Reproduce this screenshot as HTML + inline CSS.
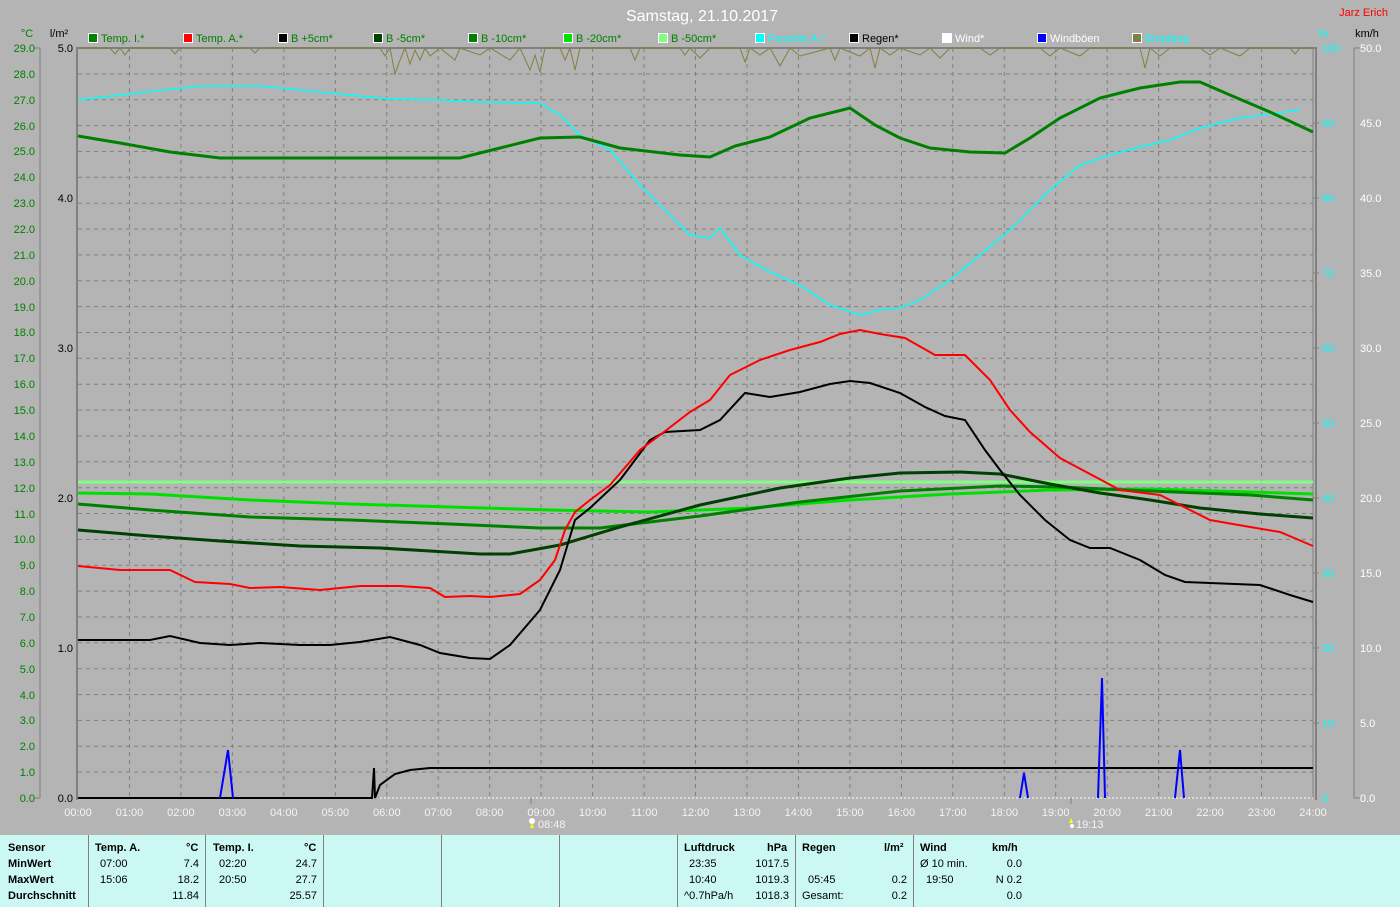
<!DOCTYPE html>
<html><head><meta charset="utf-8"><style>
html,body{margin:0;padding:0;background:#b4b4b4;width:1400px;height:907px;overflow:hidden;font-family:"Liberation Sans",sans-serif}
svg{position:absolute;left:0;top:0}
.tb{position:absolute;left:0;top:835px;width:1400px;height:72px;background:#ccf8f4;font-size:11px;color:#000}
.tb div{position:absolute;white-space:nowrap}
.b{font-weight:bold}
.sep{position:absolute;top:0;width:1px;height:72px;background:#808080}
</style></head><body>
<svg width="1400" height="835" font-family="Liberation Sans, sans-serif" font-size="11">
<text x="702" y="21" fill="#fff" font-size="16" text-anchor="middle">Samstag, 21.10.2017</text>
<text x="1388" y="16" fill="#f00" text-anchor="end">Jarz Erich</text>
<text x="27" y="37" fill="#008000" text-anchor="middle">°C</text>
<text x="59" y="37" fill="#000" text-anchor="middle">l/m²</text>
<text x="1323" y="37" fill="#0ff" text-anchor="middle">%</text>
<text x="1367" y="37" fill="#000" text-anchor="middle">km/h</text>
<g stroke="#fff" stroke-width="1">
<rect x="88.5" y="33.5" width="9" height="9" fill="#008000"/>
<rect x="183.5" y="33.5" width="9" height="9" fill="#f00"/>
<rect x="278.5" y="33.5" width="9" height="9" fill="#000"/>
<rect x="373.5" y="33.5" width="9" height="9" fill="#004000"/>
<rect x="468.5" y="33.5" width="9" height="9" fill="#008000"/>
<rect x="563.5" y="33.5" width="9" height="9" fill="#00e000"/>
<rect x="658.5" y="33.5" width="9" height="9" fill="#80ff80"/>
<rect x="755.5" y="33.5" width="9" height="9" fill="#0ff"/>
<rect x="849.5" y="33.5" width="9" height="9" fill="#000"/>
<rect x="942.5" y="33.5" width="9" height="9" fill="#fff"/>
<rect x="1037.5" y="33.5" width="9" height="9" fill="#00f"/>
<rect x="1132.5" y="33.5" width="9" height="9" fill="#808040"/>
</g>
<g>
<text x="101" y="42" fill="#008000">Temp. I.*</text>
<text x="196" y="42" fill="#008000">Temp. A.*</text>
<text x="291" y="42" fill="#008000">B +5cm*</text>
<text x="386" y="42" fill="#008000">B -5cm*</text>
<text x="481" y="42" fill="#008000">B -10cm*</text>
<text x="576" y="42" fill="#008000">B -20cm*</text>
<text x="671" y="42" fill="#008000">B -50cm*</text>
<text x="768" y="42" fill="#0ff">Feuchte A.*</text>
<text x="862" y="42" fill="#000">Regen*</text>
<text x="955" y="42" fill="#fff">Wind*</text>
<text x="1050" y="42" fill="#fff">Windböen</text>
<text x="1145" y="42" fill="#0ff">Empfang</text>
</g>
<!-- grid -->
<path stroke="#808080" stroke-dasharray="4,4" fill="none" d="M78 772.1H1313M78 746.3H1313M78 720.4H1313M78 694.6H1313M78 668.7H1313M78 642.8H1313M78 617H1313M78 591.1H1313M78 565.2H1313M78 539.4H1313M78 513.5H1313M78 487.7H1313M78 461.8H1313M78 435.9H1313M78 410.1H1313M78 384.2H1313M78 358.3H1313M78 332.5H1313M78 306.6H1313M78 280.8H1313M78 254.9H1313M78 229H1313M78 203.2H1313M78 177.3H1313M78 151.4H1313M78 125.6H1313M78 99.7H1313M78 73.9H1313M129.5 48V798M180.9 48V798M232.4 48V798M283.8 48V798M335.3 48V798M386.8 48V798M438.2 48V798M489.7 48V798M541.1 48V798M592.6 48V798M644.1 48V798M695.5 48V798M747 48V798M798.4 48V798M849.9 48V798M901.4 48V798M952.8 48V798M1004.3 48V798M1055.7 48V798M1107.2 48V798M1158.7 48V798M1210.1 48V798M1261.6 48V798"/>
<path stroke="#808080" stroke-width="2" fill="none" d="M77 47V800M1316 47V800M76 48H1316"/>
<path stroke="#808080" fill="none" d="M40 48V798M1354 48V798M1313 48V798M34 48h6M34 798h6M1354 48h6M1354 798h6M1313 723h6M1313 648h6M1313 573h6M1313 498h6M1313 423h6M1313 348h6M1313 273h6M1313 198h6M1313 123h6"/>
<!-- left labels -->
<g fill="#008000" text-anchor="end">
<text x="35" y="52">29.0</text><text x="35" y="78">28.0</text><text x="35" y="104">27.0</text><text x="35" y="130">26.0</text><text x="35" y="155">25.0</text><text x="35" y="181">24.0</text><text x="35" y="207">23.0</text><text x="35" y="233">22.0</text><text x="35" y="259">21.0</text><text x="35" y="285">20.0</text><text x="35" y="311">19.0</text><text x="35" y="336">18.0</text><text x="35" y="362">17.0</text><text x="35" y="388">16.0</text><text x="35" y="414">15.0</text><text x="35" y="440">14.0</text><text x="35" y="466">13.0</text><text x="35" y="492">12.0</text><text x="35" y="518">11.0</text><text x="35" y="543">10.0</text><text x="35" y="569">9.0</text><text x="35" y="595">8.0</text><text x="35" y="621">7.0</text><text x="35" y="647">6.0</text><text x="35" y="673">5.0</text><text x="35" y="699">4.0</text><text x="35" y="724">3.0</text><text x="35" y="750">2.0</text><text x="35" y="776">1.0</text><text x="35" y="802">0.0</text>
</g>
<g fill="#000" text-anchor="end">
<text x="73" y="52">5.0</text><text x="73" y="202">4.0</text><text x="73" y="352">3.0</text><text x="73" y="502">2.0</text><text x="73" y="652">1.0</text><text x="73" y="802">0.0</text>
</g>
<g fill="#0ff">
<text x="1322" y="52">100</text><text x="1322" y="127">90</text><text x="1322" y="202">80</text><text x="1322" y="277">70</text><text x="1322" y="352">60</text><text x="1322" y="427">50</text><text x="1322" y="502">40</text><text x="1322" y="577">30</text><text x="1322" y="652">20</text><text x="1322" y="727">10</text><text x="1322" y="802">0</text>
</g>
<g fill="#fff">
<text x="1360" y="52">50.0</text><text x="1360" y="127">45.0</text><text x="1360" y="202">40.0</text><text x="1360" y="277">35.0</text><text x="1360" y="352">30.0</text><text x="1360" y="427">25.0</text><text x="1360" y="502">20.0</text><text x="1360" y="577">15.0</text><text x="1360" y="652">10.0</text><text x="1360" y="727">5.0</text><text x="1360" y="802">0.0</text>
</g>
<g fill="#f4f4f4" text-anchor="middle">
<text x="78" y="816">00:00</text><text x="129.5" y="816">01:00</text><text x="180.9" y="816">02:00</text><text x="232.4" y="816">03:00</text><text x="283.8" y="816">04:00</text><text x="335.3" y="816">05:00</text><text x="386.8" y="816">06:00</text><text x="438.2" y="816">07:00</text><text x="489.7" y="816">08:00</text><text x="541.1" y="816">09:00</text><text x="592.6" y="816">10:00</text><text x="644.1" y="816">11:00</text><text x="695.5" y="816">12:00</text><text x="747" y="816">13:00</text><text x="798.4" y="816">14:00</text><text x="849.9" y="816">15:00</text><text x="901.4" y="816">16:00</text><text x="952.8" y="816">17:00</text><text x="1004.3" y="816">18:00</text><text x="1055.7" y="816">19:00</text><text x="1107.2" y="816">20:00</text><text x="1158.7" y="816">21:00</text><text x="1210.1" y="816">22:00</text><text x="1261.6" y="816">23:00</text><text x="1313" y="816">24:00</text>
</g>
<text x="538" y="828" fill="#f4f4f4">08:48</text>
<circle cx="532" cy="821" r="3" fill="#fff"/><path d="M532 823l-2 5h4z" fill="#ff0"/>
<text x="1076" y="828" fill="#f4f4f4">19:13</text>
<path d="M1071 818l-2 5h4z" fill="#ff0"/><circle cx="1072" cy="826" r="2" fill="#fff"/>
<path stroke="#808080" fill="none" d="M531 798v6M1071 798v6"/>
<!-- Empfang -->
<polyline fill="none" stroke="#808040" points="78,48 110,48 115,54 120,48 125,55 130,48 170,48 175,54 180,48 250,48 255,53 260,48 380,48 385,56 390,48 395,74 400,60 405,48 410,64 415,50 420,60 425,48 430,56 440,48 455,60 460,48 480,55 490,48 510,60 520,48 530,70 535,55 540,72 545,48 560,48 565,60 570,48 575,70 580,48 630,48 635,60 640,48 680,48 685,55 690,48 700,58 710,48 740,48 745,62 750,48 760,55 770,48 780,66 790,48 800,56 830,48 835,60 840,48 860,56 870,48 875,68 880,48 890,55 900,48 920,55 930,48 940,58 950,48 980,48 990,55 1000,48 1040,48 1050,56 1060,48 1080,56 1090,48 1140,48 1145,68 1150,48 1160,56 1170,48 1200,48 1210,55 1220,48 1240,56 1250,48 1290,48 1295,54 1300,48 1313,48"/>
<!-- soil lines -->
<polyline fill="none" stroke="#80ff80" stroke-width="3" points="78,482 1313,482"/>
<polyline fill="none" stroke="#00e000" stroke-width="3" points="78,493 150,494 250,500 350,504 450,507 550,510 650,512 750,508 850,500 950,494 1050,490 1150,489 1250,492 1313,494"/>
<polyline fill="none" stroke="#008000" stroke-width="3" points="78,504 150,510 250,517 350,520 450,524 540,528 600,528 700,516 800,502 900,491 1000,486 1060,487 1150,491 1250,495 1313,500"/>
<polyline fill="none" stroke="#004000" stroke-width="3" points="78,530 150,536 220,541 300,546 380,548 430,551 480,554 510,554 560,545 620,527 700,505 780,488 850,478 900,473 960,472 1000,474 1050,484 1100,493 1150,500 1200,508 1260,514 1313,518"/>
<!-- humidity -->
<polyline fill="none" stroke="#0ff" stroke-width="1.5" points="78,100 120,95 200,86 260,86 330,93 390,99 440,100 480,102 540,103 560,115 580,135 610,150 640,185 670,215 690,235 710,238 720,228 740,255 770,272 800,285 830,305 860,315 880,310 900,308 920,300 950,280 980,255 1010,230 1050,190 1080,165 1110,155 1140,147 1170,140 1200,128 1240,118 1300,110"/>
<!-- temp I -->
<polyline fill="none" stroke="#008000" stroke-width="3" points="78,136 120,143 170,152 220,158 300,158 460,158 500,148 540,138 580,137 620,148 680,155 710,157 735,146 770,137 810,118 850,108 875,125 900,138 930,148 970,152 1005,153 1030,138 1060,118 1100,98 1140,88 1180,82 1200,82 1230,95 1270,112 1313,132"/>
<!-- B+5 black -->
<polyline fill="none" stroke="#000" stroke-width="2" points="78,640 150,640 170,636 200,643 230,645 260,643 300,645 330,645 360,642 390,637 420,645 440,653 470,658 490,659 510,645 540,610 560,570 575,520 590,508 620,480 650,440 665,432 700,430 720,420 745,393 770,397 800,392 830,384 850,381 870,383 900,393 925,407 945,416 965,420 985,450 1000,470 1020,495 1045,520 1070,540 1090,548 1110,548 1140,560 1165,575 1185,582 1210,583 1260,585 1290,595 1313,602"/>
<!-- temp A red -->
<polyline fill="none" stroke="#f00" stroke-width="2" points="78,566 120,570 170,570 195,582 230,584 250,588 280,587 320,590 360,586 400,586 430,588 445,597 470,596 490,597 520,594 540,580 555,560 565,530 575,512 590,500 610,485 640,450 660,435 690,412 710,400 730,375 760,360 790,350 820,342 840,334 860,330 880,334 905,338 935,355 965,355 990,380 1010,410 1030,432 1060,458 1090,474 1120,490 1160,495 1190,510 1210,520 1250,527 1280,532 1313,546"/>
<!-- rain -->
<polyline fill="none" stroke="#000" stroke-width="2" points="78,798 372,798 374,768 375,798 380,785 395,774 410,770 430,768 1313,768"/>
<path stroke="#fff" stroke-dasharray="2,2" d="M380 798H1313"/>
<!-- wind gusts -->
<g fill="none" stroke="#00f" stroke-width="2">
<polyline points="220,798 228,750 233,798"/>
<polyline points="1020,798 1024,773 1028,798"/>
<polyline points="1098,798 1102,678 1105,798"/>
<polyline points="1175,798 1180,750 1184,798"/>
</g>
</svg>
<div class="tb">
<div class="sep" style="left:88px"></div><div class="sep" style="left:205px"></div><div class="sep" style="left:323px"></div><div class="sep" style="left:441px"></div><div class="sep" style="left:559px"></div><div class="sep" style="left:677px"></div><div class="sep" style="left:795px"></div><div class="sep" style="left:913px"></div>
<div class="b" style="left:8px;top:7px">Sensor</div>
<div class="b" style="left:8px;top:23px">MinWert</div>
<div class="b" style="left:8px;top:39px">MaxWert</div>
<div class="b" style="left:8px;top:55px">Durchschnitt</div>
<div class="b" style="left:95px;top:7px">Temp. A.</div><div class="b" style="left:186px;top:7px">°C</div>
<div style="left:100px;top:23px">07:00</div><div style="right:1201px;top:23px">7.4</div>
<div style="left:100px;top:39px">15:06</div><div style="right:1201px;top:39px">18.2</div>
<div style="right:1201px;top:55px">11.84</div>
<div class="b" style="left:213px;top:7px">Temp. I.</div><div class="b" style="left:304px;top:7px">°C</div>
<div style="left:219px;top:23px">02:20</div><div style="right:1083px;top:23px">24.7</div>
<div style="left:219px;top:39px">20:50</div><div style="right:1083px;top:39px">27.7</div>
<div style="right:1083px;top:55px">25.57</div>
<div class="b" style="left:684px;top:7px">Luftdruck</div><div class="b" style="left:767px;top:7px">hPa</div>
<div style="left:689px;top:23px">23:35</div><div style="right:611px;top:23px">1017.5</div>
<div style="left:689px;top:39px">10:40</div><div style="right:611px;top:39px">1019.3</div>
<div style="left:684px;top:55px">^0.7hPa/h</div><div style="right:611px;top:55px">1018.3</div>
<div class="b" style="left:802px;top:7px">Regen</div><div class="b" style="left:884px;top:7px">l/m²</div>
<div style="left:808px;top:39px">05:45</div><div style="right:493px;top:39px">0.2</div>
<div style="left:802px;top:55px">Gesamt:</div><div style="right:493px;top:55px">0.2</div>
<div class="b" style="left:920px;top:7px">Wind</div><div class="b" style="left:992px;top:7px">km/h</div>
<div style="left:920px;top:23px">Ø 10 min.</div><div style="right:378px;top:23px">0.0</div>
<div style="left:926px;top:39px">19:50</div><div style="right:378px;top:39px">N 0.2</div>
<div style="right:378px;top:55px">0.0</div>
</div>
</body></html>
